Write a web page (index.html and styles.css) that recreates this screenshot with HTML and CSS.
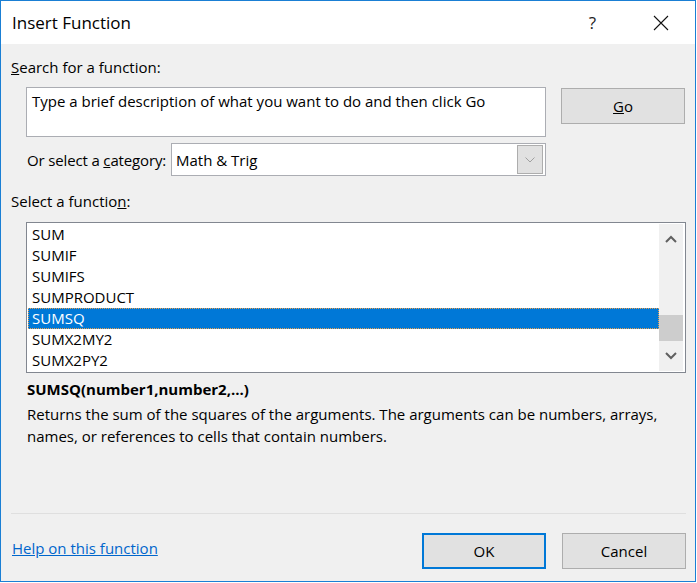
FILE: index.html
```html
<!DOCTYPE html>
<html lang="en">
<head>
  <meta charset="UTF-8" />
  <title>Insert Function</title>
  <link rel="stylesheet" href="styles.css">
</head>
<body>
  <div class="dialog">
    <div class="titlebar">
      <span class="title">Insert Function</span>
      <span class="help">?</span>
      <svg class="close" width="16" height="16" viewBox="0 0 16 16">
        <path d="M1 1 L15 15 M15 1 L1 15" stroke="#111" stroke-width="1.1" fill="none"/>
      </svg>
    </div>

    <div class="content">
      <div class="label"><u>S</u>earch for a function:</div>

      <div class="search-row">
        <div class="search-box">Type a brief description of what you want to do and then click Go</div>
        <button class="btn go"><u>G</u>o</button>
      </div>

      <div class="category-row">
        <span class="cat-label">Or select a <u>c</u>ategory:</span>
        <div class="select">
          <span class="select-value">Math &amp; Trig</span>
          <span class="select-btn">
            <svg width="10" height="6" viewBox="0 0 10 6"><polyline points="0.5,0.5 5,5 9.5,0.5" stroke="#a0a0a0" fill="none" stroke-width="1"/></svg>
          </span>
        </div>
      </div>

      <div class="label fn-label">Select a functio<u>n</u>:</div>

      <div class="listbox">
        <ul class="items">
          <li>SUM</li>
          <li>SUMIF</li>
          <li>SUMIFS</li>
          <li>SUMPRODUCT</li>
          <li class="selected">SUMSQ</li>
          <li>SUMX2MY2</li>
          <li>SUMX2PY2</li>
        </ul>
        <div class="scrollbar">
          <svg class="arrow" width="12" height="8" viewBox="0 0 12 8"><polyline points="1,7 6,2 11,7" stroke="#606060" fill="none" stroke-width="2"/></svg>
          <div class="track"><div class="thumb"></div></div>
          <svg class="arrow" width="12" height="8" viewBox="0 0 12 8"><polyline points="1,1 6,6 11,1" stroke="#606060" fill="none" stroke-width="2"/></svg>
        </div>
      </div>

      <div class="signature">SUMSQ(number1,number2,...)</div>
      <p class="desc">Returns the sum of the squares of the arguments. The arguments can be numbers, arrays, names, or references to cells that contain numbers.</p>

      <div class="footer">
        <a class="help-link" href="#">Help on this function</a>
        <div class="buttons">
          <button class="btn ok">OK</button>
          <button class="btn">Cancel</button>
        </div>
      </div>
    </div>
  </div>
</body>
</html>
```

FILE: styles.css
```css
body {
  margin: 0;
  background: #ffffff;
  font-family: "Open Sans", "Noto Sans", sans-serif;
  font-size: 15px;
  color: #000;
}
.dialog {
  width: 696px;
  height: 582px;
  box-sizing: border-box;
  border: 1px solid #1a7fd4;
  display: flex;
  flex-direction: column;
  background: #f0f0f0;
}
.titlebar {
  height: 43px;
  background: #fff;
  display: flex;
  align-items: center;
  padding: 0 26px 0 11px;
}
.title {
  font-size: 17px;
  flex: 1;
  margin-top: -1px;
}
.help {
  font-size: 17px;
  margin-right: 57px;
  color: #222;
}
.content {
  flex: 1;
  display: flex;
  flex-direction: column;
  padding: 0 9px 0 10px;
}
.label {
  margin-top: 13px;
  height: 20px;
  line-height: 20px;
}
.search-row {
  display: flex;
  margin-top: 10px;
  margin-left: 15px;
  align-items: flex-start;
}
.search-box {
  width: 520px;
  height: 50px;
  box-sizing: border-box;
  background: #fff;
  border: 1px solid #abadb3;
  padding: 3px 5px;
  line-height: 20px;
}
.btn {
  font-family: inherit;
  font-size: 15px;
  background: #e1e1e1;
  border: 1px solid #adadad;
  width: 124px;
  height: 36px;
  padding: 0;
  color: #000;
}
.go {
  margin-left: 15px;
  margin-top: 1px;
}
.category-row {
  display: flex;
  align-items: center;
  margin-top: 6px;
  margin-left: 16px;
}
.cat-label {
  width: 144px;
  white-space: nowrap;
  letter-spacing: -0.15px;
}
.select {
  width: 375px;
  height: 33px;
  box-sizing: border-box;
  background: #fff;
  border: 1px solid #abadb3;
  display: flex;
  align-items: center;
  padding: 1px 2px 1px 4px;
}
.select-value {
  flex: 1;
}
.select-btn {
  width: 26px;
  height: 29px;
  box-sizing: border-box;
  background: #e1e1e1;
  border: 1px solid #adadad;
  display: flex;
  align-items: center;
  justify-content: center;
}
.fn-label {
  margin-top: 15px;
}
.listbox {
  margin-top: 11px;
  margin-left: 15px;
  width: 660px;
  height: 151px;
  box-sizing: border-box;
  border: 1px solid #828790;
  background: #fff;
  display: flex;
  padding: 1px 2px 1px 1px;
}
.items {
  list-style: none;
  margin: 0;
  padding: 0;
  flex: 1;
}
.items li {
  height: 21px;
  line-height: 21px;
  padding-left: 4px;
  box-sizing: border-box;
}
.items li.selected {
  background: #0078d7;
  color: #fff;
  border: 1px dotted #e8a050;
  line-height: 19px;
  padding-left: 3px;
}
.scrollbar {
  width: 24px;
  background: #f0f0f0;
  display: flex;
  flex-direction: column;
  align-items: center;
}
.arrow {
  margin: 11px 0;
}
.track {
  flex: 1;
  width: 100%;
  padding-top: 61px;
}
.thumb {
  height: 26px;
  background: #cdcdcd;
}
.signature {
  font-weight: bold;
  margin-top: 6px;
  margin-left: 16px;
  line-height: 20px;
}
.desc {
  margin: 4px 0 0 16px;
  line-height: 22px;
  width: 640px;
}
.footer {
  margin-top: auto;
  border-top: 1px solid #dfdfdf;
  display: flex;
  align-items: center;
  justify-content: space-between;
  padding: 19px 0 12px 1px;
}
.help-link {
  color: #0066cc;
  text-decoration: underline;
  margin-bottom: 6px;
}
.buttons {
  display: flex;
  gap: 16px;
}
.ok {
  border: 2px solid #0078d7;
}
```
